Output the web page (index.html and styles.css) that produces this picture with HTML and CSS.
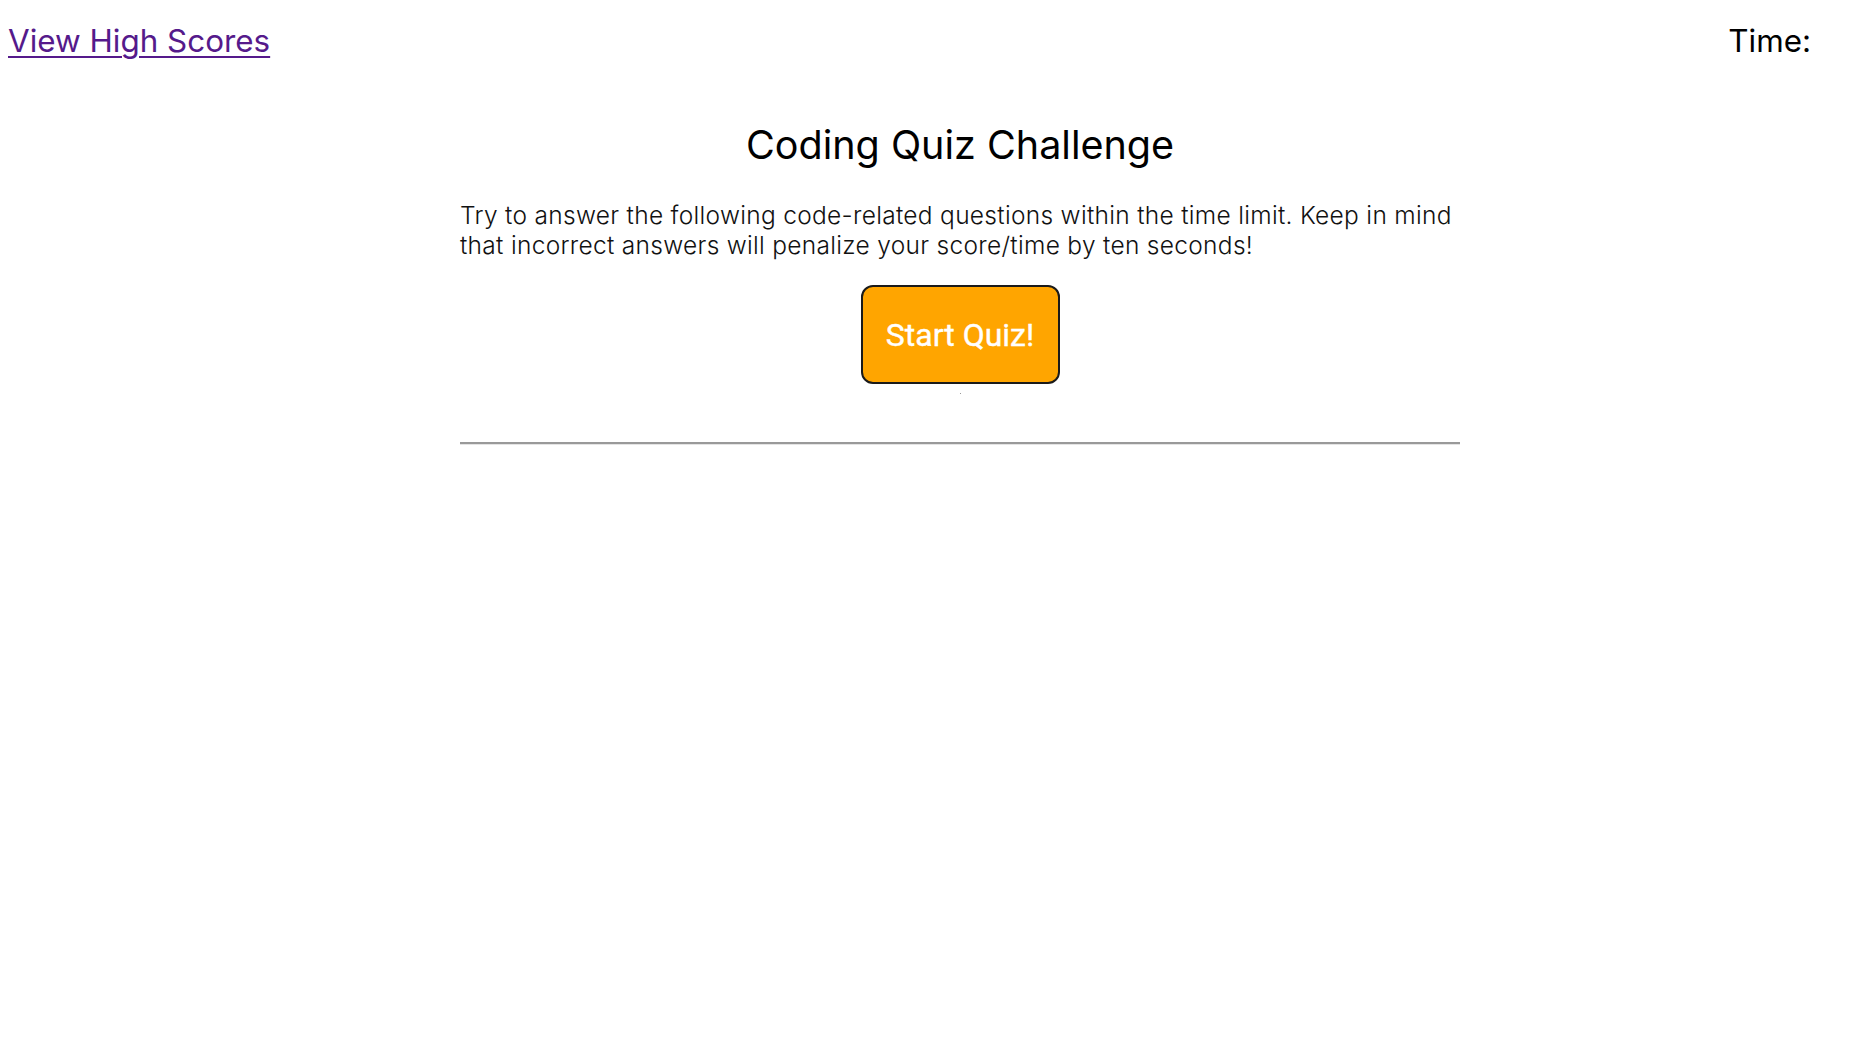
FILE: index.html
```html
<!DOCTYPE html>
<html>
<head>
<meta charset="utf-8">
<link rel="stylesheet" href="styles.css">
</head>
<body>
<header class="topbar">
  <a class="scores-link" href="#">View High Scores</a>
  <div class="timer">Time: <span class="time-value"></span></div>
</header>
<div class="page">
  <main class="quiz">
    <h1 class="title">Coding Quiz Challenge</h1>
    <p class="intro">Try to answer the following code-related questions within the time limit. Keep in mind that incorrect answers will penalize your score/time by ten seconds!</p>
    <button class="start-btn">Start Quiz!</button>
    <div class="dot"></div>
    <hr class="divider">
  </main>
</div>
</body>
</html>
```

FILE: styles.css
```css
html, body {
  margin: 0;
  padding: 0;
  background: #ffffff;
}
body {
  font-family: Inter, "Noto Sans", sans-serif;
  color: #000;
}
.topbar {
  display: flex;
  justify-content: space-between;
  align-items: flex-start;
  padding: 19px 45px 0 8px;
  font-size: 31.4px;
  line-height: 44px;
}
.scores-link {
  color: #551a8b;
  text-decoration: underline;
  text-underline-offset: 4px;
  text-decoration-thickness: 2px;
}
.page {
  padding-left: 64px;
}
.quiz {
  width: 1000px;
  margin: 0 auto;
  display: flex;
  flex-direction: column;
  align-items: center;
}
.title {
  margin: 54px 0 0;
  font-size: 39.5px;
  font-weight: 400;
  line-height: 56px;
}
.intro {
  margin: 27px 0 0;
  align-self: stretch;
  font-size: 24.5px;
  line-height: 30px;
  font-weight: 300;
  letter-spacing: 0.3px;
  color: #111;
}
.start-btn {
  margin-top: 25px;
  width: 199px;
  height: 99px;
  background: #ffa500;
  border: 2px solid #1a1a1a;
  border-radius: 12px;
  color: #fff;
  font-family: Roboto, "Noto Sans", sans-serif;
  font-size: 32px;
  font-weight: 400;
  -webkit-text-stroke: 0.4px #fff;
}
.dot {
  width: 1px;
  height: 1px;
  margin-top: 9px;
  background: #999;
}
.divider {
  align-self: stretch;
  margin: 48px 0 0;
  border: none;
  border-top: 2px solid #999;
  border-bottom: 1px solid #e4e4e4;
}
```
